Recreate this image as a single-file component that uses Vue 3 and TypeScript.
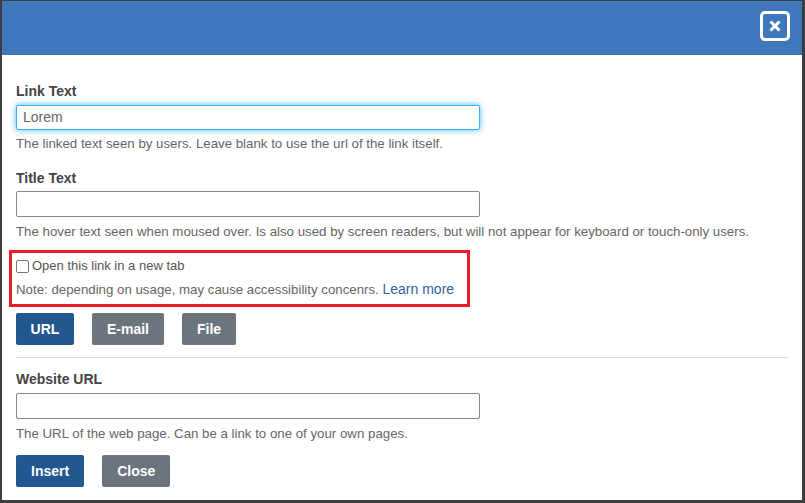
<script setup lang="ts">
const tabs: { label: string; primary: boolean }[] = [
  { label: 'URL', primary: true },
  { label: 'E-mail', primary: false },
  { label: 'File', primary: false },
]
</script>

<template>
  <div class="page">
    <div class="modal">
      <header class="head">
        <button class="x" aria-label="Close">
          <svg width="14" height="14" viewBox="0 0 14 14">
            <path d="M2.5 2.5 11.5 11.5M11.5 2.5 2.5 11.5" stroke="#fff" stroke-width="3" fill="none" />
          </svg>
        </button>
      </header>
      <div class="body">
        <div class="field first">
          <label class="lbl">Link Text</label>
          <input class="inp focus" value="Lorem" />
          <p class="help">The linked text seen by users. Leave blank to use the url of the link itself.</p>
        </div>
        <div class="field second">
          <label class="lbl">Title Text</label>
          <input class="inp" />
          <p class="help">The hover text seen when moused over. Is also used by screen readers, but will not appear for keyboard or touch-only users.</p>
        </div>
        <div class="mark">
          <label class="check"><span class="box"></span>Open this link in a new tab</label>
          <p class="note">Note: depending on usage, may cause accessibility concenrs. <a class="more">Learn more</a></p>
        </div>
        <div class="tabs">
          <button v-for="t in tabs" :key="t.label" class="btn" :class="t.primary ? 'blue' : 'grey'">{{ t.label }}</button>
        </div>
        <hr class="rule" />
        <div class="field third">
          <label class="lbl">Website URL</label>
          <input class="inp" />
          <p class="help">The URL of the web page. Can be a link to one of your own pages.</p>
        </div>
        <div class="actions">
          <button class="btn blue">Insert</button>
          <button class="btn grey">Close</button>
        </div>
      </div>
    </div>
  </div>
</template>

<style>
html, body { margin: 0; background: #3d3d3d; }
</style>

<style scoped>
.page {
  width: 805px;
  height: 503px;
  box-sizing: border-box;
  padding: 1px 3px 3px 2px;
  background: #3d3d3d;
  font-family: "Liberation Sans", Arial, sans-serif;
  overflow: hidden;
}
.modal {
  height: 100%;
  background: #fff;
  display: flex;
  flex-direction: column;
}
.head {
  height: 54px;
  box-sizing: border-box;
  flex: none;
  background: #3e77bc;
  display: flex;
  justify-content: flex-end;
  align-items: center;
  padding: 0 12px 4px 0;
}
.x {
  width: 30px;
  height: 30px;
  padding: 0;
  box-sizing: border-box;
  background: transparent;
  border: 3px solid #fff;
  border-radius: 5px;
  display: flex;
  align-items: center;
  justify-content: center;
}
.body {
  padding: 29px 14px 0;
  display: flex;
  flex-direction: column;
  color: #555;
}
.field { display: flex; flex-direction: column; }
.second { margin-top: 20px; }
.lbl {
  font-size: 14px;
  line-height: 14px;
  font-weight: 700;
  color: #444;
}
.inp {
  width: 464px;
  height: 26px;
  box-sizing: border-box;
  margin-top: 7px;
  padding: 0 6px 2px;
  border: 1px solid #858590;
  border-radius: 2px;
  font: 14px "Liberation Sans", Arial, sans-serif;
  color: #666;
  outline: none;
}
.second .inp { margin-top: 6px; }
.focus {
  height: 25px;
  border: 1px solid #3daeff;
  box-shadow: 0 0 6px #4db8ff;
}
.help {
  margin: 6px 0 0;
  font-size: 13.28px;
  line-height: 15px;
  color: #666;
}
.second .help,
.third .help { margin-top: 7px; }
.mark {
  width: 461px;
  height: 57px;
  box-sizing: border-box;
  margin: 11px 0 6px -7px;
  padding: 5px 0 0 4px;
  border: 3px solid #ed1c24;
}
.check {
  display: flex;
  align-items: center;
  font-size: 13px;
  line-height: 16px;
  color: #555;
}
.box {
  width: 11px;
  height: 11px;
  margin-right: 3px;
  border: 1px solid #767676;
  border-radius: 2px;
  flex: none;
}
.note {
  margin: 8px 0 0;
  font-size: 13.28px;
  line-height: 15px;
  color: #666;
}
.more { color: #2f659f; font-size: 14px; }
.tabs { display: flex; gap: 17.5px; }
.btn {
  height: 32px;
  padding: 0 15px;
  border: none;
  border-radius: 2px;
  color: #fff;
  font: 700 14px "Liberation Sans", Arial, sans-serif;
}
.tabs .btn:first-child { padding: 0 14.6px; }
.tabs { column-gap: 18px; }
.blue { background: #22578f; }
.grey { background: #6c757d; }
.rule {
  width: 772px;
  margin: 12px 0 14px;
  border: none;
  border-top: 1px solid #ddd;
}
.actions { display: flex; gap: 18px; margin-top: 14px; }
</style>
